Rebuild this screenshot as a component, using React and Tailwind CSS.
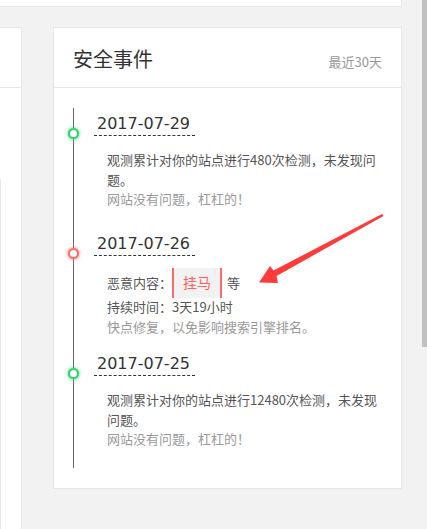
import React from "react";

const font = { fontFamily: '"Noto Sans CJK SC", "DejaVu Sans", sans-serif' };
const dateFont = { fontFamily: '"DejaVu Sans", "Noto Sans CJK SC", sans-serif' };

const Dot = ({ color }) => (
  <span
    className={`absolute left-[-6px] top-[20px] w-[11px] h-[11px] rounded-full bg-white border-2 ${
      color === "red"
        ? "border-[#ff6b6b] shadow-[0_0_3px_1px_rgba(255,107,107,0.55)]"
        : "border-[#2fd36b] shadow-[0_0_3px_1px_rgba(47,211,107,0.55)]"
    }`}
  />
);

const DateTag = ({ children }) => (
  <div
    className="ml-[20px] inline-block px-[3px] w-[101px] text-[16px] leading-[22px] text-[#333] border-b border-dashed border-[#333]"
    style={dateFont}
  >
    {children}
  </div>
);

const events = [
  {
    date: "2017-07-29",
    dot: "green",
    text: "观测累计对你的站点进行480次检测，未发现问题。",
    note: "网站没有问题，杠杠的！",
  },
  { date: "2017-07-26", dot: "red", danger: true },
  {
    date: "2017-07-25",
    dot: "green",
    text: "观测累计对你的站点进行12480次检测，未发现问题。",
    note: "网站没有问题，杠杠的！",
  },
];

const Arrow = () => (
  <svg
    className="absolute left-[255px] top-[210px]"
    width="135"
    height="80"
    viewBox="255 210 135 80"
  >
    <polygon
      points="259,282.5 270,266 273.5,270.5 382,214 383.5,216 276.5,276 278,283"
      fill="#ff3a3a"
    />
  </svg>
);

export default function App() {
  return (
    <div className="relative w-[427px] h-[529px] overflow-hidden bg-[#f2f2f2]" style={font}>
      <div className="w-[402px] h-[7px] bg-white border-b border-r border-[#e6e6e6]" />

      <div className="flex mt-[20px] gap-[31px] items-start">
        <div className="w-[22px] h-[510px] bg-white border-t border-r border-[#e6e6e6] flex flex-col">
          <div className="h-[60px] border-b border-[#e6e6e6]" />
          <div className="mt-[91px] flex-1 w-[1px] bg-[#e6e6e6]" />
        </div>

        <div className="w-[349px] bg-white border border-[#e6e6e6]">
          <div className="h-[60px] px-[19px] flex items-center justify-between border-b border-[#e6e6e6]">
            <span className="text-[20px] text-[#333] mt-[2px]">安全事件</span>
            <span className="text-[13px] text-[#999] mt-[9px]">最近30天</span>
          </div>

          <div className="pl-[19px] pr-[19px] pt-[20px] pb-[20px]">
            <ul className="border-l border-[#666]">
              {events.map((e) => (
                <li key={e.date} className="relative h-[120px] pt-[2px]">
                  <Dot color={e.dot} />
                  <DateTag>{e.date}</DateTag>
                  {e.danger ? (
                    <div className="ml-[33px] mt-[12px] text-[13px] text-[#555] leading-[19.5px]">
                      <div className="flex items-center h-[30px]">
                        <span>恶意内容：</span>
                        <span className="h-[30px] w-[50px] flex items-center justify-center bg-[#f2f2f2] border-l-2 border-r-2 border-[#ff6b6b] text-[#ff5f5f] text-[14px]">
                          挂马
                        </span>
                        <span className="ml-[5px]">等</span>
                      </div>
                      <p className="-mt-[1px]">持续时间：3天19小时</p>
                      <p className="text-[#999]">快点修复，以免影响搜索引擎排名。</p>
                    </div>
                  ) : (
                    <div className="ml-[33px] mt-[14px] w-[276px] text-[13px] text-[#555] leading-[19.5px]">
                      <p>{e.text}</p>
                      <p className="text-[#999]">{e.note}</p>
                    </div>
                  )}
                </li>
              ))}
            </ul>
          </div>
        </div>
      </div>

      <Arrow />
      <div className="absolute right-0 top-0 w-[5px] h-[347px] bg-[#c1c1c1]" />
    </div>
  );
}
